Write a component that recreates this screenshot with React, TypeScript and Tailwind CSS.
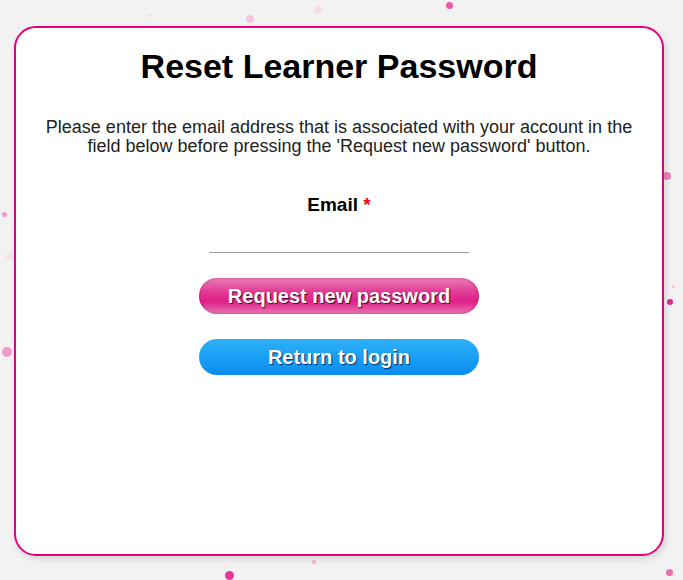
import React from "react";

const dots: { x: number; y: number; s: number; c: string }[] = [
  { x: 149, y: 15, s: 3, c: "#f3d3e4" },
  { x: 250, y: 19, s: 8, c: "#f2c6dd" },
  { x: 318, y: 10, s: 8, c: "#f3dbe7" },
  { x: 449, y: 5, s: 7, c: "#ea5aa6" },
  { x: 667, y: 176, s: 8, c: "#ee7fb9" },
  { x: 670, y: 302, s: 6, c: "#e6268d" },
  { x: 673, y: 286, s: 3, c: "#f3c9df" },
  { x: 4, y: 214, s: 5, c: "#ef9ccb" },
  { x: 9, y: 256, s: 7, c: "#f3e2ea" },
  { x: 7, y: 352, s: 10, c: "#ef9acb" },
  { x: 229, y: 575, s: 9, c: "#e6359a" },
  { x: 314, y: 562, s: 4, c: "#f2aed2" },
  { x: 669, y: 572, s: 7, c: "#ec70b2" },
];

export default function App() {
  return (
    <div
      className="relative w-[683px] h-[580px] overflow-hidden bg-[#f2f2f2]"
      style={{ fontFamily: '"Liberation Sans", Arial, sans-serif' }}
    >
      {dots.map((d, i) => (
        <span
          key={i}
          className="absolute rounded-full"
          style={{
            left: d.x - d.s / 2,
            top: d.y - d.s / 2,
            width: d.s,
            height: d.s,
            background: d.c,
          }}
        />
      ))}
      <div className="relative pt-[26px] pl-[14px]">
        <div className="w-[650px] h-[530px] bg-white border-2 border-[#e5007d] rounded-[22px] shadow-[2px_3px_6px_rgba(0,0,0,0.12)] flex flex-col items-center">
          <h1 className="mt-[20px] text-[34px] leading-[37px] font-bold text-black">
            Reset Learner Password
          </h1>
          <p className="mt-[33px] text-[18px] leading-[19px] text-[#222] text-center whitespace-nowrap">
            Please enter the email address that is associated with your account in the
            <br />
            field below before pressing the 'Request new password' button.
          </p>
          <div className="mt-[38px] text-[19px] leading-[22px] font-bold text-black">
            Email <span className="text-[#ff0000]">*</span>
          </div>
          <div className="mt-[36px] w-[260px] h-[1px] bg-[#9a9a9a]" />
          <button
            className="mt-[25px] w-[280px] h-[36px] rounded-full text-white font-bold text-[20px] [text-shadow:1px_1px_1px_rgba(40,0,30,0.85)] bg-[linear-gradient(to_bottom,#ea80b6_0%,#e23f97_35%,#e01e88_65%,#e57ab2_100%)] shadow-[inset_0_0_3px_rgba(160,0,80,0.5)]"
          >
            Request new password
          </button>
          <button
            className="mt-[25px] w-[280px] h-[36px] rounded-full text-white font-bold text-[20px] [text-shadow:1px_1px_1px_rgba(0,30,80,0.85)] bg-[linear-gradient(to_bottom,#2eb0f8_0%,#1a9ff5_50%,#0a8cf0_100%)]"
          >
            Return to login
          </button>
        </div>
      </div>
    </div>
  );
}
